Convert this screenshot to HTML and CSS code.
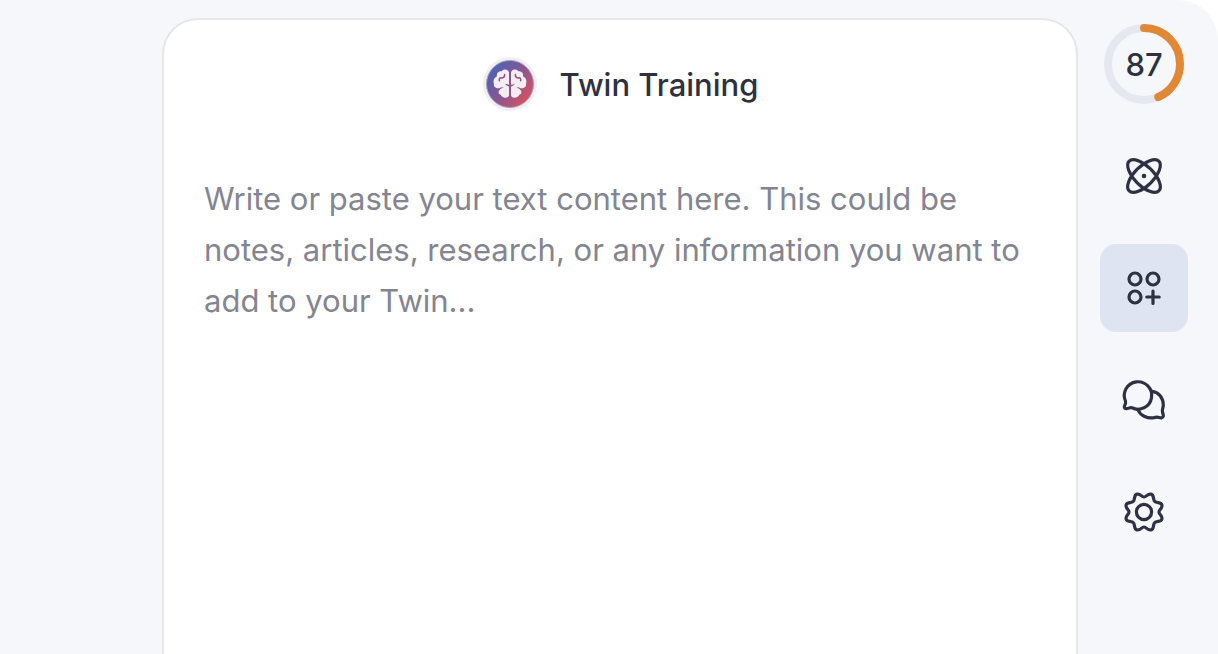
FILE: index.html
```
<!DOCTYPE html>
<html lang="en">

<head>
  <meta charset="UTF-8" />
  <meta name="viewport" content="width=device-width, initial-scale=1.0"/>
  <title>Twin Training</title>
  <link rel="stylesheet" href="styles.css">
</head>

<body>

  <div class="app">
    <main class="card">
      <header class="card-header">
        <svg class="logo" viewBox="0 0 56 56" aria-hidden="true">
          <defs>
            <linearGradient id="logo-fill" x1="0.1" y1="0.2" x2="0.9" y2="0.85">
              <stop offset="0" stop-color="#4f62b4" />
              <stop offset="0.5" stop-color="#8a5590" />
              <stop offset="1" stop-color="#d9525c" />
            </linearGradient>
          </defs>
          <circle cx="28" cy="28" r="27" fill="#f1edf5" />
          <circle cx="28" cy="28" r="23.5" fill="url(#logo-fill)" stroke="#a7a0b8" />
          <g id="brain-half">
            <path fill="#f3edf1" d="M27 16.5C26.5 13 21.5 12.6 19.6 15.2C16 15 14.4 17.6 15 20.2C12 21.8 10.8 25 12 27.8C11.4 31 14 32.6 17.5 32.2C19 31 20.6 31 21.8 31.8C20 32 18.4 33 17.4 34.2C15.8 36 16.6 38.2 18.6 38.6C19.4 42 25.6 43.2 27 39.6V30.4C24.8 30 23.6 29 23 27.6C24 28.4 25.4 28.8 27 28.8Z" />
            <path class="fold" d="M22.6 18.5C23 21.4 20.6 22.4 18.8 21.8C17.4 22.2 16.8 23.5 17.4 24.8" />
          </g>
          <use href="#brain-half" transform="matrix(-1 0 0 1 56 0)" />
        </svg>
        <h1>Twin Training</h1>
      </header>
      <textarea class="content" aria-label="Text content" placeholder="Write or paste your text content here. This could be notes, articles, research, or any information you want to add to your Twin..."></textarea>
    </main>

    <aside class="sidebar">
      <div class="score">
        <svg viewBox="0 0 80 80" aria-hidden="true">
          <circle class="score-track" cx="40" cy="40" r="36" />
          <circle class="score-value" cx="40" cy="40" r="36" pathLength="100" />
        </svg>
        <span>87</span>
      </div>

      <nav class="nav">
        <button type="button" aria-label="Explore">
          <svg viewBox="0 0 48 48">
            <ellipse cx="24" cy="24" rx="21" ry="9.6" transform="rotate(45 24 24)" />
            <ellipse cx="24" cy="24" rx="21" ry="9.6" transform="rotate(-45 24 24)" />
            <circle class="dot" cx="24" cy="24" r="2.3" />
          </svg>
        </button>
        <button type="button" class="active" aria-label="Add content" aria-current="page">
          <svg viewBox="0 0 48 48">
            <circle cx="15" cy="15" r="6" />
            <circle cx="33" cy="15" r="6" />
            <circle cx="15" cy="33" r="6" />
            <path d="M33 27v12.4M26.8 33h12.4" />
          </svg>
        </button>
        <button type="button" aria-label="Chats">
          <svg viewBox="0 0 48 48">
            <path d="M5.5 25.1A13.7 13.7 0 1 1 12 31.8C9.5 31 8.5 33 6 32.7C4 32.4 4 30.8 4.8 29.4C5.6 28 5.9 26.6 5.5 25.1Z" />
            <path d="M32.5 15.3C39 16.3 43.3 22.5 43.3 29C43.3 31.5 42.3 33 42.4 35C42.6 37.5 43.5 38.5 43.3 40C43 42.3 40.5 42 39 41.5C37 40.8 36 41 34 41.6C28 43 20.5 40 17.8 33.5" />
          </svg>
        </button>
        <button type="button" aria-label="Settings">
          <svg viewBox="-24 -24 48 48">
            <path d="M0-15C2.5-15 3.5-18.6 7-17.9C10.4-17.2 8.6-12.8 10.7-10.7C12.8-8.6 17.2-10.4 17.9-7C18.6-3.5 15-2.5 15 0C15 2.5 18.6 3.5 17.9 7C17.2 10.4 12.8 8.6 10.7 10.7C8.6 12.8 10.4 17.2 7 17.9C3.5 18.6 2.5 15 0 15C-2.5 15-3.5 18.6-7 17.9C-10.4 17.2-8.6 12.8-10.7 10.7C-12.8 8.6-17.2 10.4-17.9 7C-18.6 3.5-15 2.5-15 0C-15-2.5-18.6-3.5-17.9-7C-17.2-10.4-12.8-8.6-10.7-10.7C-8.6-12.8-10.4-17.2-7-17.9C-3.5-18.6-2.5-15 0-15Z" />
            <circle r="7.6" />
          </svg>
        </button>
      </nav>
    </aside>
  </div>

</body>
</html>
```

FILE: styles.css
```
:root {
  --ink: #2d3142;
  --muted: #838593;
  --bg: #f5f7fb;
  --active: #dee4f1;
  --accent: #e28733;
}

* {
  margin: 0;
  padding: 0;
  box-sizing: border-box;
  font-family: Inter, sans-serif;
}

body {
  background: #ffffff;
  color: var(--ink);
}

.app {
  display: flex;
  gap: 22px;
  min-height: 100vh;
  padding: 18px 30px 0 162px;
  background: var(--bg);
  border-radius: 0 40px 0 0;
}

.card {
  flex: 1;
  display: flex;
  flex-direction: column;
  gap: 61px;
  padding: 36px 40px 0;
  background: #ffffff;
  border: 2px solid #e4e6ea;
  border-bottom: none;
  border-radius: 36px 36px 0 0;
}

.card-header {
  display: flex;
  justify-content: center;
  align-items: center;
  gap: 22px;
}

.logo {
  width: 56px;
  height: 56px;
}

.fold {
  fill: none;
  stroke: #8a5590;
  stroke-width: 1.5;
  stroke-linecap: round;
}

h1 {
  font-size: 31px;
  font-weight: 500;
}

.content {
  flex: 1;
  width: 100%;
  border: none;
  outline: none;
  resize: none;
  background: transparent;
  color: var(--ink);
  font-size: 31px;
  line-height: 51px;
}

.content::placeholder {
  color: var(--muted);
}

.sidebar {
  display: flex;
  flex-direction: column;
  align-items: center;
  gap: 28px;
  padding-top: 6px;
}

.score {
  display: grid;
  place-items: center;
  width: 80px;
  height: 80px;
  font-size: 31px;
  font-weight: 500;
}

.score svg,
.score span {
  grid-area: 1 / 1;
}

.score svg {
  width: 80px;
  height: 80px;
  transform: rotate(-90deg);
}

.score circle {
  fill: none;
  stroke-width: 8;
}

.score-track {
  stroke: #e5e8f0;
}

.score .score-value {
  stroke: var(--accent);
  stroke-linecap: round;
  stroke-dasharray: 43.5 100;
}

.nav {
  display: flex;
  flex-direction: column;
  gap: 24px;
}

.nav button {
  display: grid;
  place-items: center;
  width: 88px;
  height: 88px;
  border: none;
  border-radius: 16px;
  background: transparent;
  color: var(--ink);
  cursor: pointer;
}

.nav button:hover,
.nav .active {
  background: var(--active);
}

.nav svg {
  width: 48px;
  height: 48px;
  fill: none;
  stroke: currentColor;
  stroke-width: 3.2;
  stroke-linecap: round;
  stroke-linejoin: round;
}

.nav .dot {
  fill: currentColor;
  stroke: none;
}
```
